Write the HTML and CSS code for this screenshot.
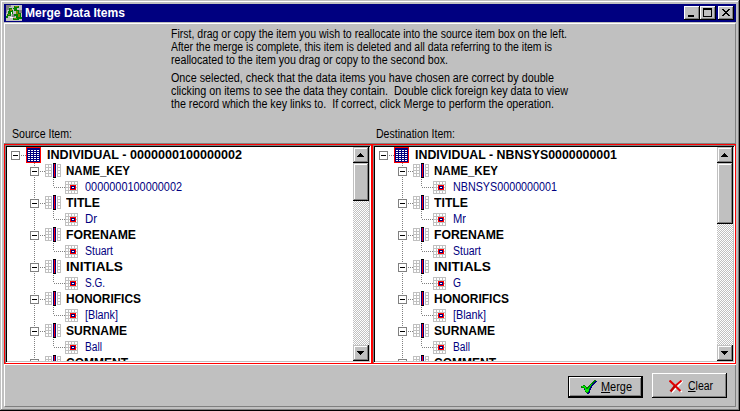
FILE: index.html
```html
<!DOCTYPE html>
<html lang="en">
<head>
<meta charset="utf-8">
<title>Merge Data Items</title>
<link rel="stylesheet" href="styles.css">
</head>
<body>
<svg class="defs" aria-hidden="true">
  <symbol id="root" viewBox="0 0 15 16" shape-rendering="crispEdges">
    <path fill="#f00" d="M0 0h15v16H0z"/><path fill="#000080" d="M1 1h13v14H1z"/>
    <path stroke="#fff" stroke-dasharray="2 1" d="M2 3.5h11M2 5.5h11M2 7.5h11M2 9.5h11M2 11.5h11M2 13.5h11"/>
  </symbol>
  <symbol id="field" viewBox="0 0 16 15" shape-rendering="crispEdges">
    <path fill="#c0c0c0" d="M0 1h7v13H0zM12 1h4v13h-4z"/>
    <path stroke="#fff" stroke-width="2" stroke-dasharray="2 1" d="M2 2v12M5 2v12M14 2v12"/>
    <path fill="#000080" d="M8 0h3v15H8z"/><path fill="#000" d="M8 0h3v1H8zM8 14h3v1H8z"/><path fill="#f00" d="M9 1h1v13H9z"/>
  </symbol>
  <symbol id="value" viewBox="0 0 13 13" shape-rendering="crispEdges">
    <path fill="#c0c0c0" d="M0 0h13v13H0z"/>
    <path stroke="#fff" stroke-width="2" stroke-dasharray="2 1" d="M1 2h11M1 5h11M1 8h11M1 11h11"/>
    <path fill="#f00" d="M5 4h6v5H5z"/><path fill="#000080" d="M6 5h4v3H6z"/><path fill="#fff" d="M7 6h2v1H7z"/>
  </symbol>
  <symbol id="box" viewBox="0 0 9 9" shape-rendering="crispEdges">
    <path fill="#fff" stroke="#808080" d="M.5.5h8v8h-8z"/><path fill="#000" d="M2 4h5v1H2z"/>
  </symbol>
</svg>
<div class="window">
  <header class="titlebar">
    <svg class="app-icon" viewBox="0 0 16 16" shape-rendering="crispEdges">
      <path fill="#c0c0c0" d="M0 0h16v16H0z"/>
      <path fill="#808080" d="M0 0h5v2H3v3H1v3H0zM11 5h5v3h-3zM6 9h3v3H6z"/>
      <path fill="#008000" d="M3 3h3v2h1v4H5v2H2v2H0v-2h1V9h1V6h1zM8 1h5v2h-2v2h2v3h2v4h1v2h-3v1H7v-2h3v-2H8V9h2V6H8V4H7V3h1z"/>
      <path fill="#808000" d="M4 4h2v2H4zM9 1h3v1H9zM10 6h2v3h-2zM12 9h2v3h-2zM8 13h3v1H8zM2 9h2v1H2z"/>
      <path fill="#fff" d="M5 7h1v2H5zM4 12h3v1H4z"/>
    </svg>
    <span class="title fit" data-width="100">Merge Data Items</span>
    <div class="controls">
      <button class="control" aria-label="Minimize"><svg viewBox="0 0 16 14" shape-rendering="crispEdges"><path d="M4 9h6v2H4z"/></svg></button>
      <button class="control" aria-label="Maximize"><svg viewBox="0 0 16 14" shape-rendering="crispEdges"><path fill-rule="evenodd" d="M3 2h9v9H3zM4 4v6h7V4z"/></svg></button>
      <button class="control close" aria-label="Close"><svg viewBox="0 0 16 14" shape-rendering="crispEdges"><path d="M4 3h2v1h1v1h2V4h1V3h2v1h-1v1h-1v1H9v1h1v1h1v1h1v1h-2V9H9V8H7v1H6v1H4V9h1V8h1V7h1V6H6V5H5V4H4z"/></svg></button>
    </div>
  </header>
  <main class="client">
    <section class="intro">
      <p><span class="fit" data-width="396">First, drag or copy the item you wish to reallocate into the source item box on the left.</span>
      <span class="fit" data-width="381">After the merge is complete, this item is deleted and all data referring to the item is</span>
      <span class="fit" data-width="277">reallocated to the item you drag or copy to the second box.</span></p>
      <p><span class="fit" data-width="383">Once selected, check that the data items you have chosen are correct by double</span>
      <span class="fit" data-width="397">clicking on items to see the data they contain.&nbsp; Double click foreign key data to view</span>
      <span class="fit" data-width="383">the record which the key links to.&nbsp; If correct, click Merge to perform the operation.</span></p>
    </section>
    <div class="labels"><span><span class="fit" data-width="60">Source Item:</span></span><span><span class="fit" data-width="79">Destination Item:</span></span></div>
    <div class="panels">
      <section class="panel source"><div class="well"><div class="tree" id="source"></div>
        <div class="scrollbar"><div class="arrow"><svg viewBox="0 0 16 16" shape-rendering="crispEdges"><path d="M7 6h1v1h1v1h1v1h1v1H4V9h1V8h1V7h1z"/></svg></div><div class="thumb"></div><div class="arrow down"><svg viewBox="0 0 16 16" shape-rendering="crispEdges"><path d="M4 6h7v1h-1v1H9v1H8v1H7V9H6V8H5V7H4z"/></svg></div></div></div></section>
      <section class="panel destination"><div class="well"><div class="tree" id="destination"></div>
        <div class="scrollbar"><div class="arrow"><svg viewBox="0 0 16 16" shape-rendering="crispEdges"><path d="M7 6h1v1h1v1h1v1h1v1H4V9h1V8h1V7h1z"/></svg></div><div class="thumb"></div><div class="arrow down"><svg viewBox="0 0 16 16" shape-rendering="crispEdges"><path d="M4 6h7v1h-1v1H9v1H8v1H7V9H6V8H5V7H4z"/></svg></div></div></div></section>
    </div>
    <footer class="actions">
      <button class="action merge"><svg viewBox="0 0 17 14" width="17" height="14" shape-rendering="crispEdges"><path fill="#000080" d="m4 6 2 3 7-8h3l-5 6-3 7H6L3 9z"/><path fill="#008000" d="m0 6 4-1 2 3 7-8h2l-5 6-3 7H5L3 8H0z"/><path fill="#0e0" d="m1 6 3 0 2 4 7-9-4 6-2 5H5L3 7H1z"/></svg><span class="fit" data-width="31"><u>M</u>erge</span></button>
      <button class="action clear"><svg viewBox="0 0 14 13" width="14" height="13"><path stroke="#fff" stroke-width="1.6" d="m2 2 11 10M13.500 1 3 12.500"/><path stroke="#e00000" stroke-width="2.200" d="m.5.5 11 10.500"/><path stroke="#e00000" stroke-width="1.700" d="M12.500.5 5 7"/><path stroke="#c00000" stroke-width="2.400" d="M6 6 1.500 11.500"/></svg><span class="fit" data-width="25"><u>C</u>lear</span></button>
    </footer>
  </main>
</div>
<script src="tree.js"></script>
</body>
</html>
```
FILE: styles.css
```css
* { box-sizing: border-box; }
body {
  margin: 0;
  font: 12px/13px "Liberation Sans", Arial, sans-serif;
  color: #000;
  background: #c0c0c0;
  overflow: hidden;
}
svg { display: block; }
.defs { display: none; }
.fit { display: inline-block; white-space: nowrap; transform-origin: 0 50%; }
.window {
  width: 740px;
  height: 411px;
  padding: 4px;
  display: flex;
  flex-direction: column;
  gap: 1px;
  box-shadow: inset -1px -1px #000, inset 1px 1px #c0c0c0, inset -2px -2px #808080, inset 2px 2px #fff;
}
.titlebar {
  height: 18px;
  flex: none;
  display: flex;
  align-items: center;
  padding: 0 2px;
  background: #000080;
  color: #fff;
}
.app-icon { width: 16px; height: 16px; margin-right: 3px; }
.title { font-weight: bold; }
.controls { display: flex; margin-left: auto; }
.control, .arrow, .thumb {
  padding: 0;
  border: 0;
  background: #c0c0c0;
  box-shadow: inset -1px -1px #000, inset 1px 1px #fff, inset -2px -2px #808080;
}
.control { width: 16px; height: 14px; }
.control svg { width: 16px; height: 14px; }
.close { margin-left: 2px; }
.client {
  height: 384px;
  border: 1px solid;
  border-color: #fff #808080 #808080 #fff;
}
.intro { height: 104px; padding: 4px 0 0 166px; }
.intro p { margin: 0 0 5px; }
.intro .fit { display: block; width: max-content; }
.labels {
  height: 15px;
  display: grid;
  grid-template-columns: 364px 1fr;
  padding-left: 7px;
  line-height: 13px;
}
.labels > span { height: 13px; }
.panels {
  display: grid;
  grid-template-columns: 368px 364px;
  height: 222px;
  margin: 0 -1px;
  border-top: 1px solid #808080;
  border-bottom: 1px solid #fff;
}
.panel {
  border: 1px solid #f00;
  height: 220px;
}
.well {
  display: flex;
  height: 218px;
  padding: 2px;
  background: #fff;
  box-shadow: inset 1px 1px #808080, inset -1px -1px #fff, inset 2px 2px #000, inset -2px -2px #c0c0c0;
}
.tree { flex: 1; height: 214px; overflow: hidden; }
.row {
  display: flex;
  height: 16px;
  align-items: center;
  line-height: 16px;
}
.row svg { flex: none; }
.root { padding-left: 4px; font-weight: bold; }
.field { padding-left: 23px; font-weight: bold; background: repeating-linear-gradient(#808080 0 1px, transparent 1px 2px) 27px 0 / 1px 16px no-repeat; }
.value { padding-left: 46px; color: #000080; background: repeating-linear-gradient(#808080 0 1px, transparent 1px 2px) 27px 0 / 1px 16px no-repeat, repeating-linear-gradient(#808080 0 1px, transparent 1px 2px) 46px 0 / 1px 8px no-repeat; }
.dots {
  flex: none;
  height: 1px;
  background: repeating-linear-gradient(90deg, transparent 0 1px, #808080 1px 2px);
}
.root .dots { width: 6px; }
.field .dots { width: 6px; }
.value .dots { width: 12px; margin-top: 1px; }
.root .icon { width: 15px; height: 16px; margin-right: 6px; }
.field .icon { width: 16px; height: 15px; margin: 0 5px 1px 0; }
.value .icon { width: 13px; height: 13px; margin: 1px 7px 0 0; }
.twist { width: 9px; height: 9px; margin-top: 1px; }
.scrollbar {
  width: 16px;
  height: 214px;
  display: flex;
  flex-direction: column;
  background: repeating-conic-gradient(#c0c0c0 0 25%, #fff 0 50%) 0 0 / 2px 2px;
}
.arrow, .thumb { box-shadow: inset -1px -1px #000, inset 1px 1px #c0c0c0, inset -2px -2px #808080, inset 2px 2px #fff; }
.arrow { height: 16px; flex: none; }
.down { margin-top: auto; }
.thumb { height: 38px; }
.destination .thumb { height: 61px; }
.actions { display: flex; gap: 9px; padding: 8px 8px 0 0; justify-content: flex-end; }
.action {
  display: flex;
  width: 75px;
  height: 25px;
  padding: 0;
  border: 0;
  font: inherit;
  background: #c0c0c0;
  box-shadow: inset -1px -1px #000, inset 1px 1px #fff, inset -2px -2px #808080;
}
.merge {
  height: 22px;
  margin-top: 3px;
  padding: 4px 0 0 13px;
  gap: 3px;
  box-shadow: inset 0 0 0 1px #000, inset -2px -2px #000, inset 2px 2px #fff, inset -3px -3px #808080;
}
.merge .fit { padding-top: 1px; }
.clear { padding: 7px 0 0 17px; gap: 5px; }
```
FILE: tree.js
```javascript
const fields = [
  ["NAME_KEY", 64], ["TITLE", 34], ["FORENAME", 70], ["INITIALS", 57],
  ["HONORIFICS", 75], ["SURNAME", 61], ["COMMENT", 62]
];
const records = {
  source: {
    root: ["INDIVIDUAL - 0000000100000002", 195],
    values: [["0000000100000002", 97], ["Dr", 12], ["Stuart", 28], ["S.G.", 20], ["[Blank]", 33], ["Ball", 17]]
  },
  destination: {
    root: ["INDIVIDUAL - NBNSYS0000000001", 202],
    values: [["NBNSYS0000000001", 104], ["Mr", 13], ["Stuart", 28], ["G", 8], ["[Blank]", 33], ["Ball", 17]]
  }
};
const row = (kind, [text, width]) => `<div class="row ${kind}">${
  kind === "value" ? "" : '<svg class="twist"><use href="#box"/></svg>'
}<span class="dots"></span><svg class="icon"><use href="#${kind}"/></svg><span class="fit" data-width="${width}">${text}</span></div>`;

for (const [id, record] of Object.entries(records)) {
  document.getElementById(id).innerHTML = row("root", record.root) +
    fields.map((f, i) => row("field", f) + (record.values[i] ? row("value", record.values[i]) : "")).join("");
}
for (const label of document.querySelectorAll(".fit")) {
  label.style.transform = `scaleX(${label.dataset.width / label.getBoundingClientRect().width})`;
}
```
